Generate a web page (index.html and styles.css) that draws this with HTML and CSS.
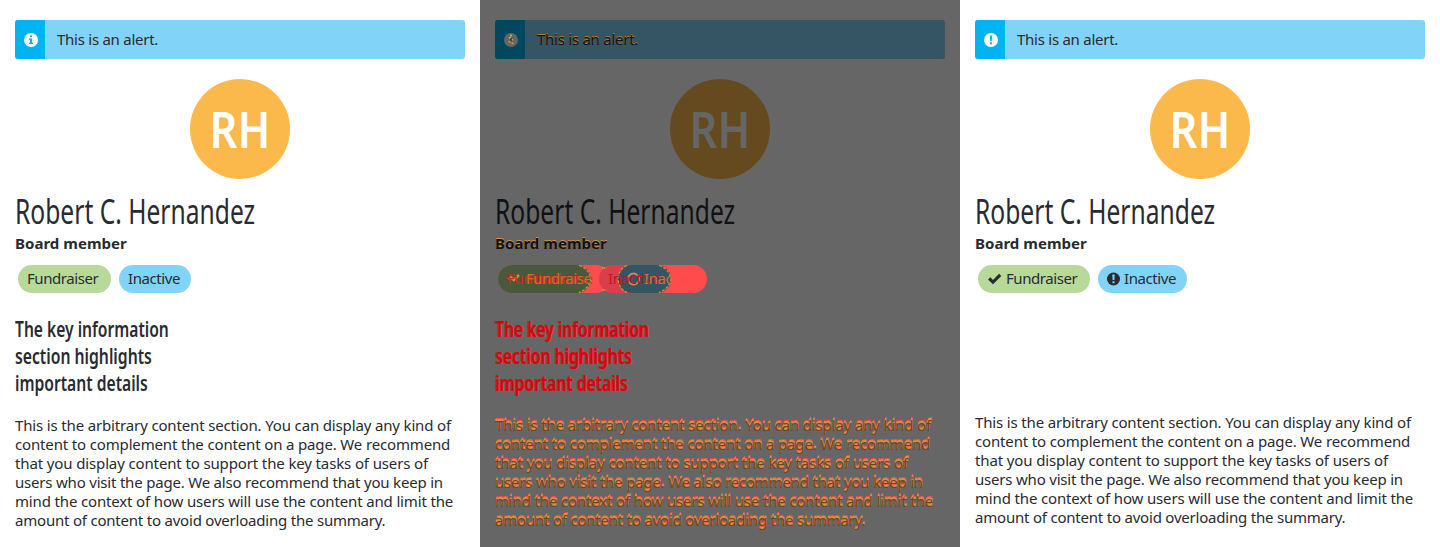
FILE: index.html
```
<!DOCTYPE html>
<html lang="en">
<head>
<meta charset="utf-8">
<title>Summary comparison</title>
<link rel="stylesheet" href="styles.css">
</head>
<body>
<main class="comparison">
  <section class="panel">
    <div class="alert">
      <div class="alert-icon"><svg viewBox="0 0 14 14" width="14" height="14"><circle cx="7" cy="7" r="7" fill="#fff"/><path d="M6 2.3h2v1.8H6zM5 5.6h3v4.2h1v1.3H5V9.8h1V6.9H5z" fill="#00b4f1"/></svg></div>
      <span class="alert-text">This is an alert.</span>
    </div>
    <div class="avatar"><span>RH</span></div>
    <h1 class="name"><span>Robert C. Hernandez</span></h1>
    <div class="role">Board member</div>
    <div class="labels"><span class="label green w93">Fundraiser</span><span class="label blue w72">Inactive</span></div>
    <h2 class="key"><span class="k1">The key information</span><span class="k2">section highlights</span><span class="k3">important details</span></h2>
    <p class="content"><span class="l1">This is the arbitrary content section. You can display any kind of</span><span class="l2">content to complement the content on a page. We recommend</span><span class="l3">that you display content to support the key tasks of users of</span><span class="l4">users who visit the page. We also recommend that you keep in</span><span class="l5">mind the context of how users will use the content and limit the</span><span class="l6">amount of content to avoid overloading the summary.</span></p>
  </section>
  <section class="panel diff">
    <div class="alert">
      <div class="alert-icon"><svg viewBox="0 0 14 14" width="14" height="14"><circle cx="7" cy="7" r="7" fill="#666"/><path d="M6 1.5h2v2H6zM4.5 4H7v2H5.500zM7 6h2v1.500H7zM4.500 8H7v1.500H4.500zM7.500 9.500h2v1.500h-2z" fill="#e0983c"/><path d="M6.300 5h1.400v3.500H6.300z" fill="#00485f"/></svg></div>
      <span class="alert-text">This is an alert.</span>
    </div>
    <div class="avatar"><span>RH</span></div>
    <h1 class="name"><span>Robert C. Hernandez</span></h1>
    <div class="role">Board member</div>
    <div class="overlap">
      <svg viewBox="0 0 210 28" width="210" height="28"><rect x="0" width="112" height="28" rx="14" fill="#ff4b4b"/><rect width="93" height="28" rx="14" fill="#495a3c"/><rect x="101" width="108" height="28" rx="14" fill="#ff4b4b"/><rect x="101" width="72" height="28" rx="14" fill="#d93f4b"/><rect x="120" width="53" height="28" rx="14" fill="#345564"/><path d="M81 .5q10 3 12 13.500q-2 10-12 13.500M161 .5q10 3 12 13.500q-2 10-12 13.500M129 .5q-8 3-9 13.500q1 10 9 13.500M104 3h5M104 25h5" fill="none" stroke="#c9903f" stroke-width="1.300" stroke-dasharray="3 1.500"/><path d="M10 14l3-1.500 3 2.500 5-5" fill="none" stroke="#d98a35" stroke-width="2.500"/><circle cx="135.500" cy="14" r="5.500" fill="none" stroke="#c98a50" stroke-width="2"/></svg>
      <span class="ghost g1">Fundraiser</span><span class="ghost g2">Fundraise</span><span class="ghost g3">Inactive</span><span class="ghost g4">Inac</span>
    </div>
    <h2 class="key"><span class="k1">The key information</span><span class="k2">section highlights</span><span class="k3">important details</span></h2>
    <p class="content"><span class="l1">This is the arbitrary content section. You can display any kind of</span><span class="l2">content to complement the content on a page. We recommend</span><span class="l3">that you display content to support the key tasks of users of</span><span class="l4">users who visit the page. We also recommend that you keep in</span><span class="l5">mind the context of how users will use the content and limit the</span><span class="l6">amount of content to avoid overloading the summary.</span></p>
  </section>
  <section class="panel current">
    <div class="alert">
      <div class="alert-icon"><svg viewBox="0 0 14 14" width="14" height="14"><circle cx="7" cy="7" r="7" fill="#fff"/><path d="M5.900 2.500h2.200L7.800 8H6.200zM6 9.200h2v2H6z" fill="#00b4f1"/></svg></div>
      <span class="alert-text">This is an alert.</span>
    </div>
    <div class="avatar"><span>RH</span></div>
    <h1 class="name"><span>Robert C. Hernandez</span></h1>
    <div class="role">Board member</div>
    <div class="labels">
      <span class="label green w112"><svg viewBox="0 0 15 14" width="15" height="14"><path d="M1 7.500 3.300 5.200 6 7.900 12.100 1.800 14.300 4 6 12.300z" fill="#282b31"/></svg>Fundraiser</span><span class="label blue w89"><svg viewBox="0 0 13 14" width="13" height="14"><circle cx="6.500" cy="7" r="6.500" fill="#282b31"/><path d="M5.300 2.500h2.400L7.400 8H5.600zM5.500 9.200h2v2h-2z" fill="#81d4f7"/></svg>Inactive</span>
    </div>
    <p class="content"><span class="l1">This is the arbitrary content section. You can display any kind of</span><span class="l2">content to complement the content on a page. We recommend</span><span class="l3">that you display content to support the key tasks of users of</span><span class="l4">users who visit the page. We also recommend that you keep in</span><span class="l5">mind the context of how users will use the content and limit the</span><span class="l6">amount of content to avoid overloading the summary.</span></p>
  </section>
</main>
</body>
</html>
```
FILE: styles.css
```
* { box-sizing: border-box; }
body { margin: 0; background: #fff; color: #282b31; font: 15px/19px "Noto Sans", sans-serif; }
svg { display: block; flex: none; }
.comparison { display: grid; grid-template-columns: repeat(3, 480px); height: 547px; overflow: hidden; }
.panel { padding: 20px 15px 0; white-space: nowrap; }
.alert { display: flex; height: 39px; border-radius: 3px; overflow: hidden; background: #81d4f7; }
.alert-icon { width: 30px; padding-left: 1px; background: #00b4f1; display: flex; align-items: center; justify-content: center; }
.alert-text { padding: 10px 0 0 12px; letter-spacing: -0.26px; }
.avatar { width: 100px; height: 100px; margin: 20px auto 0; border-radius: 50%; background: #fbb84b; color: #fff; font-size: 50px; font-weight: 600; line-height: 100px; display: flex; justify-content: center; }
.avatar span { transform: scaleX(.87); }
.name { margin: 12px 0 0; font-size: 34px; line-height: 40px; font-weight: 400; height: 40px; }
.name span { display: inline-block; transform: scaleX(.724); transform-origin: left; }
.role { margin-top: 2px; font-weight: 700; line-height: 20px; letter-spacing: 0.03px; }
.labels { display: flex; gap: 8px; margin: 12px 0 0 3px; height: 28px; }
.label { display: flex; align-items: center; gap: 4px; height: 28px; padding: 0 0 1px 9px; border-radius: 14px; letter-spacing: -0.42px; }
.w93 { width: 93px; }
.w72 { width: 72px; }
.w112 { width: 112px; }
.w89 { width: 89px; }
.green { background: #b7da9b; }
.blue { background: #81d4f7; }
.key { display: flex; flex-direction: column; margin: 22px 0 0; height: 81px; font-size: 22px; line-height: 27px; font-weight: 600; }
.key span { transform-origin: left; align-self: flex-start; }
.k1 { transform: scaleX(.71); }
.k2 { transform: scaleX(.715); }
.k3 { transform: scaleX(.712); }
.content { margin: 20px 0 0; display: flex; flex-direction: column; align-items: flex-start; }
.l1, .l2, .l5 { letter-spacing: -0.152px; }
.l3 { letter-spacing: -0.13px; }
.l4 { letter-spacing: -0.2px; }
.l6 { letter-spacing: -0.21px; }
.current .content { margin-top: 120px; }
.diff { background: #666; color: #101114; }
.diff .alert { background: #345564; }
.diff .alert-icon { background: #00485f; }
.diff .avatar { background: #644a1e; color: #666; }
.diff .alert-text { text-shadow: 0 -1px #b87524; }
.diff .role { text-shadow: 0 -1px #d99043; }
.diff .key { color: #c80a12; text-shadow: 1px 0 #f02c30, -1px 0 #e02a2e; }
.diff .content { color: #6e4523; text-shadow: 0 -1px #d99043, 0 -2px #d99043, 0 -3px #ff4b4b; }
.overlap { position: relative; height: 28px; margin: 12px 0 0 3px; }
.ghost { position: absolute; top: 4px; letter-spacing: -0.42px; }
.g1 { left: 9px; color: #cf2525; }
.g2 { left: 28px; color: #d1701e; text-shadow: 1px 0 #d8232a; }
.g3 { left: 110px; color: #c41420; }
.g4 { left: 146px; color: #d1703e; }
```
